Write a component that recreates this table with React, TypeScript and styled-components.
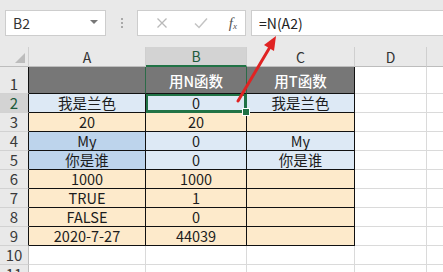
import React from "react";
import styled, { createGlobalStyle } from "styled-components";

type Tone = "blue" | "deep" | "peach" | "none";

interface RowData {
    n: number;
    cells: [string, string, string];
    tones: [Tone, Tone, Tone];
}

const rows: RowData[] = [
    { n: 2, cells: ["我是兰色", "0", "我是兰色"], tones: ["blue", "blue", "blue"] },
    { n: 3, cells: ["20", "20", ""], tones: ["peach", "peach", "peach"] },
    { n: 4, cells: ["My", "0", "My"], tones: ["deep", "blue", "blue"] },
    { n: 5, cells: ["你是谁", "0", "你是谁"], tones: ["deep", "blue", "blue"] },
    { n: 6, cells: ["1000", "1000", ""], tones: ["peach", "peach", "peach"] },
    { n: 7, cells: ["TRUE", "1", ""], tones: ["peach", "peach", "peach"] },
    { n: 8, cells: ["FALSE", "0", ""], tones: ["peach", "peach", "peach"] },
    { n: 9, cells: ["2020-7-27", "44039", ""], tones: ["peach", "peach", "peach"] },
];

const toneColor: Record<Tone, string> = {
    blue: "#dde9f5",
    deep: "#bdd4ec",
    peach: "#fdeacb",
    none: "#ffffff",
};

const App: React.FC = () => {
    return (
        <>
            <GlobalStyle />
            <Page>
                <Toolbar>
                    <NameBox>
                        <span>B2</span>
                        <Caret />
                    </NameBox>
                    <Dots>
                        <i />
                        <i />
                        <i />
                    </Dots>
                    <FnBox>
                        <FnIcon>
                            <svg width="12" height="12" viewBox="0 0 12 12">
                                <path d="M1.5 1.5 L10.5 10.5 M10.5 1.5 L1.5 10.5" stroke="#b9b9b9" strokeWidth="1.3" fill="none" />
                            </svg>
                        </FnIcon>
                        <FnIcon>
                            <svg width="14" height="12" viewBox="0 0 14 12">
                                <path d="M1 6.5 L5 10.5 L13 1.5" stroke="#c4c4c4" strokeWidth="1.5" fill="none" />
                            </svg>
                        </FnIcon>
                        <FxLabel>
                            f<sub>x</sub>
                        </FxLabel>
                    </FnBox>
                    <Formula>=N(A2)</Formula>
                </Toolbar>

                <Sheet>
                    <Corner />
                    <ColHead>A</ColHead>
                    <ColHead $active>B</ColHead>
                    <ColHead>C</ColHead>
                    <ColHead>D</ColHead>
                    <ColHead $last />

                    <RowHead $tall $edge>1</RowHead>
                    <TitleCell $green="right" />
                    <TitleCell $green="box">用N函数</TitleCell>
                    <TitleCell>用T函数</TitleCell>
                    <Cell $tone="none" $grid />
                    <Cell $tone="none" $grid $last />

                    {rows.map((r) => (
                        <React.Fragment key={r.n}>
                            <RowHead $active={r.n === 2} $edge>
                                {r.n}
                            </RowHead>
                            {r.cells.map((c, i) => (
                                <Cell key={i} $tone={r.tones[i]} $selected={r.n === 2 && i === 1}>
                                    {c}
                                </Cell>
                            ))}
                            <Cell $tone="none" $grid />
                            <Cell $tone="none" $grid $last />
                        </React.Fragment>
                    ))}

                    {[10, 11].map((n) => (
                        <React.Fragment key={n}>
                            <RowHead>{n}</RowHead>
                            <Cell $tone="none" $grid />
                            <Cell $tone="none" $grid />
                            <Cell $tone="none" $grid />
                            <Cell $tone="none" $grid />
                            <Cell $tone="none" $grid $last />
                        </React.Fragment>
                    ))}
                </Sheet>

                <Arrow width="443" height="272" viewBox="0 0 443 272">
                    <line x1="238" y1="101" x2="270" y2="47" stroke="#e02323" strokeWidth="3" strokeLinecap="round" />
                    <polygon points="276,36 264,45 274,51" fill="#e02323" />
                </Arrow>
            </Page>
        </>
    );
};

export default App;

// Styled Components
const GlobalStyle = createGlobalStyle`
    html, body {
        margin: 0;
        padding: 0;
        background: #ffffff;
    }
    body {
        font-family: "Noto Sans CJK SC", "Noto Sans", sans-serif;
        overflow: hidden;
    }
`;

const Page = styled.div`
    position: relative;
    width: 443px;
    height: 272px;
    overflow: hidden;
    background: #ffffff;
`;

const Toolbar = styled.div`
    height: 47px;
    box-sizing: border-box;
    padding: 10px 0 0 5px;
    background: #e9e9e9;
    display: flex;
    align-items: flex-start;
`;

const Box = styled.div`
    height: 26px;
    box-sizing: border-box;
    background: #ffffff;
    border: 1px solid #cdcdcd;
    display: flex;
    align-items: center;
`;

const NameBox = styled(Box)`
    width: 101px;
    padding: 0 7px 0 7px;
    justify-content: space-between;
    font-size: 14px;
    color: #333333;
`;

const Caret = styled.span`
    width: 0;
    height: 0;
    border-left: 4px solid transparent;
    border-right: 4px solid transparent;
    border-top: 4px solid #777777;
    margin-top: -2px;
`;

const Dots = styled.div`
    width: 31px;
    height: 26px;
    display: flex;
    flex-direction: column;
    align-items: center;
    justify-content: center;
    gap: 2px;

    i {
        width: 2px;
        height: 2px;
        background: #a9a9a9;
        display: block;
    }
`;

const FnBox = styled(Box)`
    width: 109px;
    padding: 0 8px 0 12px;
    justify-content: space-between;
`;

const FnIcon = styled.span`
    display: flex;
    align-items: center;
    width: 24px;
    justify-content: center;
`;

const FxLabel = styled.span`
    font-family: "Liberation Serif", serif;
    font-style: italic;
    font-size: 15px;
    color: #555555;
    line-height: 1;

    sub {
        font-size: 9px;
        vertical-align: -1px;
    }
`;

const Formula = styled(Box)`
    flex: 1;
    margin-left: 5px;
    border-right: none;
    padding-left: 7px;
    font-size: 14px;
    color: #222222;
`;

const Sheet = styled.div`
    display: grid;
    grid-template-columns: 29px 117px 101px 108px 72px 1fr;
    grid-template-rows: 20px 27px repeat(10, 19px);
`;

const Corner = styled.div`
    position: relative;
    background: #e9e9e9;
    border-right: 1px solid #cfcfcf;
    border-bottom: 1px solid #bdbdbd;
    box-sizing: border-box;

    &::after {
        content: "";
        position: absolute;
        right: 3px;
        bottom: 3px;
        border-left: 10px solid transparent;
        border-bottom: 10px solid #bcbcbc;
    }
`;

const ColHead = styled.div<{ $active?: boolean; $last?: boolean }>`
    box-sizing: border-box;
    background: ${({ $active }) => ($active ? "#d3d3d3" : "#e9e9e9")};
    color: ${({ $active }) => ($active ? "#1e5a3a" : "#333333")};
    border-right: ${({ $last }) => ($last ? "none" : "1px solid #cfcfcf")};
    border-bottom: ${({ $active }) => ($active ? "2px solid #217346" : "1px solid #bdbdbd")};
    font-size: 14px;
    display: flex;
    align-items: center;
    justify-content: center;
    line-height: 1;
`;

const RowHead = styled.div<{ $active?: boolean; $tall?: boolean; $edge?: boolean }>`
    box-sizing: border-box;
    background: ${({ $active }) => ($active ? "#d3d3d3" : "#e9e9e9")};
    color: ${({ $active }) => ($active ? "#1e5a3a" : "#3a3a3a")};
    border-right: 1px solid ${({ $edge }) => ($edge ? "#111111" : "#bdbdbd")};
    border-bottom: 1px solid #d2d2d2;
    font-size: 15px;
    display: flex;
    align-items: flex-end;
    justify-content: center;
    line-height: 18px;
`;

const TitleCell = styled.div<{ $green?: "right" | "box" }>`
    box-sizing: border-box;
    background: #777777;
    color: #ffffff;
    font-size: 14.5px;
    font-weight: 500;
    display: flex;
    align-items: flex-end;
    justify-content: center;
    line-height: 20px;
    padding-bottom: 2px;
    border-bottom: 1px solid #111111;
    border-right: 1px solid ${({ $green }) => ($green ? "#2c6b48" : "#111111")};
`;

const Cell = styled.div<{ $tone: Tone; $grid?: boolean; $last?: boolean; $selected?: boolean }>`
    position: relative;
    box-sizing: border-box;
    background: ${({ $tone }) => toneColor[$tone]};
    color: #1c1c1c;
    font-size: 14.5px;
    display: flex;
    align-items: flex-end;
    justify-content: center;
    line-height: 18px;
    white-space: nowrap;
    border-bottom: 1px solid ${({ $grid }) => ($grid ? "#dadada" : "#111111")};
    border-right: ${({ $grid, $last }) => ($last ? "none" : $grid ? "1px solid #dadada" : "1px solid #111111")};
    box-shadow: ${({ $selected }) => ($selected ? "inset 0 0 0 2px #217346" : "none")};

    ${({ $selected }) =>
        $selected &&
        `
        border-right-color: #217346;
        border-bottom-color: #217346;
        &::after {
            content: "";
            position: absolute;
            right: -4px;
            bottom: -4px;
            width: 6px;
            height: 6px;
            background: #217346;
            border: 1px solid #ffffff;
            z-index: 2;
        }
    `}
`;

const Arrow = styled.svg`
    position: absolute;
    left: 0;
    top: 0;
    pointer-events: none;
`;
